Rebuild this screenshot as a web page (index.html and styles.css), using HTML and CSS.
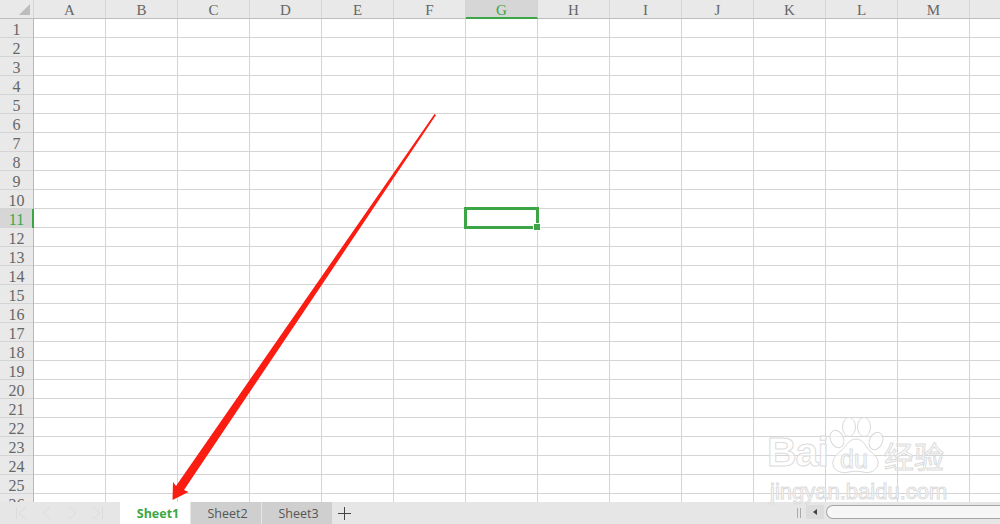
FILE: index.html
```html
<!DOCTYPE html>
<html>
<head>
    <title>Sheet</title>
    <link rel="stylesheet" href="styles.css">
</head>
<body>
    <div class="sheet">
        <div class="col-head">
            <div class="corner"><span class="corner-mark"></span></div>
            <div class="col">A</div>
            <div class="col">B</div>
            <div class="col">C</div>
            <div class="col">D</div>
            <div class="col">E</div>
            <div class="col">F</div>
            <div class="col active">G</div>
            <div class="col">H</div>
            <div class="col">I</div>
            <div class="col">J</div>
            <div class="col">K</div>
            <div class="col">L</div>
            <div class="col">M</div>
            <div class="col"></div>
        </div>
        <div class="body">
            <div class="row-head">
                <div class="row">1</div>
                <div class="row">2</div>
                <div class="row">3</div>
                <div class="row">4</div>
                <div class="row">5</div>
                <div class="row">6</div>
                <div class="row">7</div>
                <div class="row">8</div>
                <div class="row">9</div>
                <div class="row">10</div>
                <div class="row active">11</div>
                <div class="row">12</div>
                <div class="row">13</div>
                <div class="row">14</div>
                <div class="row">15</div>
                <div class="row">16</div>
                <div class="row">17</div>
                <div class="row">18</div>
                <div class="row">19</div>
                <div class="row">20</div>
                <div class="row">21</div>
                <div class="row">22</div>
                <div class="row">23</div>
                <div class="row">24</div>
                <div class="row">25</div>
                <div class="row">26</div>
            </div>
            <div class="cells">
                <div class="selected"><span class="handle"></span></div>
            </div>
        </div>
    </div>

    <div class="tabbar">
        <div class="nav">
            <svg width="120" height="22" viewBox="0 0 120 22" fill="none" stroke="#dcdcdc" stroke-width="1">
                <path d="M16.500 5v12M26 5l-7 6 7 6"/>
                <path d="M50 5l-7 6 7 6"/>
                <path d="M69 5l7 6-7 6"/>
                <path d="M93 5l7 6-7 6M102.500 5v12"/>
            </svg>
        </div>
        <div class="tab current">Sheet1</div>
        <div class="tab">Sheet2</div>
        <div class="tab">Sheet3</div>
        <div class="add">
            <svg width="13" height="13" viewBox="0 0 13 13" stroke="#444" stroke-width="1">
                <path d="M0 6.500h13M6.500 0v13"/>
            </svg>
        </div>
        <div class="tab-right">
            <span class="grip"></span>
            <div class="scroll-btn"><span class="scroll-arrow"></span></div>
            <div class="scroll-thumb"></div>
        </div>
    </div>

    <svg class="arrow" width="1000" height="524" viewBox="0 0 1000 524">
        <path d="M434.500 114 L436 115 L184 490 L188.500 492 L172.500 500 L173 482 L176 486 Z" fill="#fb1c12"/>
    </svg>

    <div class="watermark">
        <div class="mark-top">
            <span class="mark-bai">Bai</span>
            <div class="paw">
                <svg width="56" height="58" viewBox="0 0 56 58" fill="rgba(255,255,255,.6)" stroke="#d9d9d9" stroke-width="1">
                    <ellipse cx="9" cy="22" rx="6.500" ry="9" transform="rotate(-25 9 22)"/>
                    <ellipse cx="21" cy="10" rx="6.500" ry="9.500"/>
                    <ellipse cx="36" cy="10" rx="6.500" ry="9.500"/>
                    <ellipse cx="48" cy="24" rx="6.500" ry="9" transform="rotate(25 48 24)"/>
                    <path d="M28 22c7 0 9 7 14 12 5 4 9 8 8 13-1 7-9 10-15 8-4-1-10-1-14 0-7 2-15-1-16-7-1-5 2-10 8-14 5-4 7-12 15-12z"/>
                </svg>
                <span class="mark-du">du</span>
            </div>
            <span class="mark-cn">经验</span>
        </div>
        <div class="mark-url">jingyan.baidu.com</div>
    </div>
</body>
</html>
```
FILE: styles.css
```css
* { box-sizing: border-box; }

body {
    margin: 0;
    width: 1000px;
    height: 524px;
    overflow: hidden;
    position: relative;
    display: flex;
    flex-direction: column;
    background: white;
    font-family: "Liberation Serif", serif;
}

.sheet {
    height: 502px;
    overflow: hidden;
}

.col-head {
    display: flex;
    height: 19px;
    background: #e9e9e9;
    border-bottom: 1px solid #bdbdbd;
}

.corner {
    width: 34px;
    flex: none;
    border-right: 1px solid #d4d4d4;
    position: relative;
}

.corner-mark {
    position: absolute;
    right: 3px;
    top: 4px;
    width: 0;
    height: 0;
    border-left: 11px solid transparent;
    border-bottom: 11px solid #bcbcbc;
}

.col {
    width: 72px;
    flex: none;
    border-right: 1px solid #d4d4d4;
    text-align: center;
    font-size: 15px;
    line-height: 21px;
    color: #666;
}

.col.active {
    background: #d6d6d6;
    color: #3ca646;
    height: 19px;
    border-bottom: 2px solid #3ca646;
}

.body {
    display: flex;
}

.row-head {
    width: 34px;
    flex: none;
    background: #e9e9e9;
    border-right: 1px solid #b9b9b9;
}

.row {
    height: 19px;
    border-bottom: 1px solid #d4d4d4;
    text-align: center;
    font-size: 16px;
    line-height: 21px;
    color: #666;
}

.row.active {
    background: #d6d6d6;
    color: #3ca646;
    position: relative;
}

.row.active::after {
    content: "";
    position: absolute;
    left: 32px;
    top: 0;
    width: 2px;
    height: 19px;
    background: #3ca646;
}

.cells {
    flex: 1;
    height: 494px;
    position: relative;
    background-image:
        linear-gradient(to right, transparent 71px, #d4d4d4 71px),
        linear-gradient(to bottom, transparent 18px, #d4d4d4 18px);
    background-size: 72px 19px;
}

.selected {
    position: absolute;
    left: 430px;
    top: 188px;
    width: 75px;
    height: 22px;
    border: 3px solid #3ca646;
}

.handle {
    position: absolute;
    right: -4px;
    bottom: -4px;
    width: 6px;
    height: 6px;
    background: #3ca646;
    border: 1px solid white;
    box-sizing: content-box;
    margin: -1px;
}

.tabbar {
    height: 22px;
    display: flex;
    background: #e6e6e6;
    font-family: "Open Sans", "Liberation Sans", sans-serif;
    font-size: 12.500px;
    color: #555;
}

.nav {
    width: 120px;
    flex: none;
}

.nav svg {
    display: block;
}

.tab {
    width: 70px;
    flex: none;
    margin-right: 1px;
    padding-left: 3px;
    background: #cfcfcf;
    text-align: center;
    line-height: 23px;
}

.tab.current {
    padding-left: 6px;
    background: white;
    color: #3ca646;
    font-weight: bold;
}

.add {
    width: 24px;
    padding: 5px 0 0 5px;
}

.add svg {
    display: block;
}

.tab-right {
    flex: 1;
    display: flex;
    justify-content: flex-end;
    padding-top: 3px;
}

.grip {
    width: 4px;
    height: 10px;
    margin: 3px 5px 0 0;
    border-left: 1px solid #aaa;
    border-right: 1px solid #aaa;
}

.scroll-btn {
    width: 18px;
    height: 14px;
    background: #dcdcdc;
    margin-right: 2px;
    padding: 4px 0 0 7px;
}

.scroll-arrow {
    display: block;
    width: 0;
    height: 0;
    border: 3px solid transparent;
    border-left: 0;
    border-right: 4px solid #444;
}

.scroll-thumb {
    width: 174px;
    height: 14px;
    background: #f6f6f6;
    border: 1px solid #a6a6a6;
    border-right: 0;
    border-radius: 7px 0 0 7px;
}

.arrow {
    position: absolute;
    left: 0;
    top: 0;
}

.watermark {
    position: absolute;
    left: 767px;
    top: 417px;
    width: 190px;
    color: rgba(255,255,255,.6);
    -webkit-text-stroke: 1px #dcdcdc;
    font-family: "Liberation Sans", sans-serif;
}

.mark-top {
    display: flex;
    align-items: flex-end;
    height: 58px;
}

.mark-bai {
    font-size: 41px;
    line-height: 46px;
    font-weight: bold;
    letter-spacing: -1px;
    width: 61px;
}

.paw {
    width: 56px;
    height: 58px;
    position: relative;
}

.mark-du {
    position: absolute;
    left: 12px;
    top: 29px;
    font-size: 25px;
    line-height: 26px;
}

.mark-cn {
    font-family: "Noto Sans CJK SC", sans-serif;
    font-size: 30px;
    line-height: 40px;
}

.mark-url {
    font-size: 22px;
    line-height: 26px;
    margin: 4px 0 0 3px;
    white-space: nowrap;
}
```
